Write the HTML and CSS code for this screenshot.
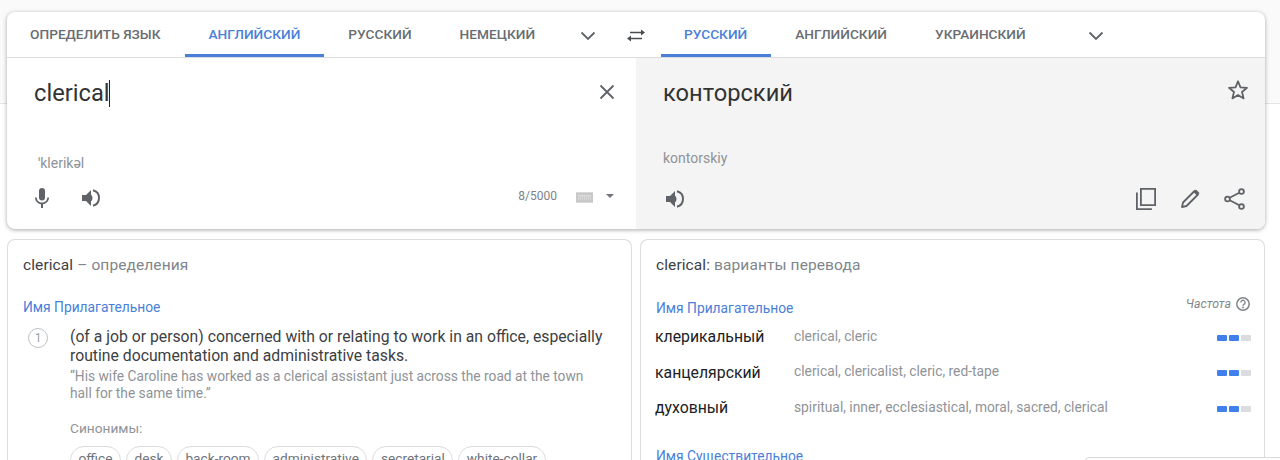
FILE: index.html
```html
<!DOCTYPE html>
<html lang="ru">
<head>
<meta charset="utf-8">
<title>Переводчик</title>
<link rel="stylesheet" href="styles.css">
</head>
<body>
<main class="page">
  <section class="translator">
    <div class="tabbar">
      <nav class="tabs tabs-src">
        <span class="tab">ОПРЕДЕЛИТЬ ЯЗЫК</span>
        <span class="tab tab-on">АНГЛИЙСКИЙ</span>
        <span class="tab">РУССКИЙ</span>
        <span class="tab">НЕМЕЦКИЙ</span>
        <svg class="chev" viewBox="0 0 16 10"><path d="M1.500 1.500 8 8l6.500-6.500" fill="none" stroke="#5f6368" stroke-width="1.800"/></svg>
      </nav>
      <svg class="swap" viewBox="0 0 18 13"><path fill="#4a4d50" d="M3 2.800h11V.5L18 3.500l-4 3V4.300H3zM15 8.800H4V6.500l-4 3 4 3v-2.200h11z"/></svg>
      <nav class="tabs tabs-dst">
        <span class="tab tab-on">РУССКИЙ</span>
        <span class="tab">АНГЛИЙСКИЙ</span>
        <span class="tab">УКРАИНСКИЙ</span>
        <svg class="chev chev-dst" viewBox="0 0 16 10"><path d="M1.500 1.500 8 8l6.500-6.500" fill="none" stroke="#5f6368" stroke-width="1.800"/></svg>
      </nav>
    </div>
    <div class="panes">
      <div class="pane pane-src">
        <div class="main-row">
          <span class="big-text">clerical<span class="caret"></span></span>
          <svg class="ico-x" viewBox="0 0 16 16"><path d="M1.500 1.500l13 13M14.500 1.500l-13 13" stroke="#5f6368" stroke-width="1.800" fill="none"/></svg>
        </div>
        <div class="phon phon-src">ˈklerikəl</div>
        <div class="actions">
          <svg class="ico mic" viewBox="0 0 24 24"><path fill="#5f6368" d="M12 14.500a3 3 0 0 0 3-3V5a3 3 0 0 0-6 0v6.500a3 3 0 0 0 3 3zm5.300-3c0 3-2.500 5.100-5.300 5.100S6.700 14.500 6.700 11.500H5c0 3.400 2.700 6.200 6 6.700V22h2v-3.800c3.300-.5 6-3.300 6-6.700z"/></svg>
          <svg class="ico spk" viewBox="0 0 24 24"><path fill="#5f6368" d="M3 9v6h4l5 5V4L7 9zm10.500 3c0-1.800-1-3.300-2.500-4v8c1.500-.7 2.500-2.200 2.500-4z"/><path fill="none" stroke="#5f6368" stroke-width="2" d="M14 4.300c3.500.9 6 4 6 7.700s-2.500 6.800-6 7.700"/></svg>
          <span class="count">8/5000</span>
          <svg class="kbd" viewBox="0 0 18 11"><rect width="18" height="11" fill="#c8c8c8"/><path d="M2 3.500h14M3 3v5M5 3v5M7 3v5M9 3v5M11 3v5M13 3v5M15 3v5" stroke="#e8e8e8" stroke-width=".6"/></svg>
          <span class="tri"></span>
        </div>
      </div>
      <div class="pane pane-dst">
        <div class="main-row">
          <span class="big-text">конторский</span>
          <svg class="ico-star" viewBox="0 0 24 24"><path fill="none" stroke="#5f6368" stroke-width="1.800" stroke-linejoin="round" d="M12 3.300l2.500 6 6.500.5-5 4.200 1.600 6.400L12 17l-5.600 3.400L8 14 3 9.800l6.500-.5z"/></svg>
        </div>
        <div class="phon phon-dst">kontorskiy</div>
        <div class="actions">
          <svg class="ico spk" viewBox="0 0 24 24"><path fill="#5f6368" d="M3 9v6h4l5 5V4L7 9zm10.500 3c0-1.800-1-3.300-2.500-4v8c1.500-.7 2.500-2.200 2.500-4z"/><path fill="none" stroke="#5f6368" stroke-width="2" d="M14 4.300c3.500.9 6 4 6 7.700s-2.500 6.800-6 7.700"/></svg>
          <span class="spacer"></span>
          <svg class="ico copy" viewBox="0 0 24 24"><path fill="none" stroke="#5f6368" stroke-width="1.800" d="M6.900 1.900h14.200v16.200H6.900z"/><path fill="none" stroke="#5f6368" stroke-width="1.800" d="M2.900 5.500v16.600h15"/></svg>
          <svg class="ico pencil" viewBox="0 0 24 24"><path fill="none" stroke="#5f6368" stroke-width="1.800" stroke-linejoin="round" d="M4 20l1-4.500L16.500 4l3.500 3.500L8.500 19z"/><path fill="#5f6368" d="M15.500 5l2.500-2.500 3.500 3.500L19 8.500z"/></svg>
          <svg class="ico share" viewBox="0 0 24 24"><g fill="none" stroke="#5f6368" stroke-width="1.800"><circle cx="18.500" cy="4.500" r="2.400"/><circle cx="4.500" cy="12" r="2.400"/><circle cx="18.500" cy="19.500" r="2.400"/><path d="M6.700 10.800l9.600-5.100M6.700 13.200l9.600 5.100"/></g></svg>
        </div>
      </div>
    </div>
  </section>

  <div class="lower">
    <section class="card">
      <h2 class="card-title"><span class="word">clerical</span> – определения</h2>
      <h3 class="pos">Имя Прилагательное</h3>
      <div class="def">
        <span class="num">1</span>
        <div class="def-body">
          <p class="def-text">(of a job or person) concerned with or relating to work in an office, especially routine documentation and administrative tasks.</p>
          <p class="def-ex">“His wife Caroline has worked as a clerical assistant just across the road at the town hall for the same time.”</p>
          <p class="syn-label">Синонимы:</p>
          <div class="chips">
            <span class="chip">office</span><span class="chip">desk</span><span class="chip">back-room</span><span class="chip">administrative</span><span class="chip">secretarial</span><span class="chip">white-collar</span>
          </div>
        </div>
      </div>
    </section>
    <section class="card card-r">
      <h2 class="card-title"><span class="word">clerical:</span> варианты перевода</h2>
      <div class="pos-row">
        <h3 class="pos pos-tr">Имя Прилагательное</h3>
        <span class="freq">Частота <svg class="help" viewBox="0 0 16 16"><circle cx="8" cy="8" r="6.200" fill="none" stroke="#80868b" stroke-width="1.500"/><path d="M5.900 6.400a2.100 2.100 0 1 1 3.300 1.700c-.8.500-1.200.9-1.200 1.700" fill="none" stroke="#80868b" stroke-width="1.300"/><circle cx="8" cy="11.500" r=".9" fill="#80868b"/></svg></span>
      </div>
      <div class="tr-row"><span class="tr-word">клерикальный</span><span class="tr-syn">clerical, cleric</span><span class="bars"><i></i><i></i><i class="off"></i></span></div>
      <div class="tr-row"><span class="tr-word">канцелярский</span><span class="tr-syn">clerical, clericalist, cleric, red-tape</span><span class="bars"><i></i><i></i><i class="off"></i></span></div>
      <div class="tr-row"><span class="tr-word">духовный</span><span class="tr-syn">spiritual, inner, ecclesiastical, moral, sacred, clerical</span><span class="bars"><i></i><i></i><i class="off"></i></span></div>
      <h3 class="pos pos-noun">Имя Существительное</h3>
    </section>
  </div>
  <div class="popup"></div>
</main>
</body>
</html>
```
FILE: styles.css
```css
html, body {
  margin: 0;
  height: 460px;
  overflow: hidden;
}
body {
  background: linear-gradient(#fafafa 0, #fafafa 103px, #e4e4e4 103px, #e4e4e4 104px, #fff 104px);
  font-family: Roboto, "Noto Sans", sans-serif;
  color: #3c4043;
}
.page {
  position: relative;
  height: 460px;
  padding: 12px 15px 0 7px;
  box-sizing: border-box;
  overflow: hidden;
}
h2, h3, p { margin: 0; font-weight: 400; }

.translator {
  background: #fff;
  border-radius: 8px;
  box-shadow: 0 1px 4px rgba(0,0,0,.34);
  height: 217px;
  overflow: hidden;
}
.tabbar {
  display: flex;
  align-items: stretch;
  height: 46px;
  box-sizing: border-box;
  border-bottom: 1px solid #dcdcdc;
}
.tabs { display: flex; align-items: stretch; }
.tabs-src { width: 620px; flex: none; }
.tabs-dst { flex: 1; padding-left: 16px; }
.tab {
  padding: 0 24px;
  font-size: 13.7px;
  font-weight: 500;
  line-height: 45px;
  height: 45px;
  box-sizing: border-box;
  color: #696d71;
  white-space: nowrap;
}
.tabs-src .tab:first-child { padding-left: 23px; }
.tabs-dst .tab:first-child { padding-left: 23px; }
.tab-on {
  color: #4a7fd9;
  border-bottom: 3px solid #4a7fd9;
}
.chev { width: 16px; height: 10px; align-self: center; margin: 3px 0 0 21px; }
.chev-dst { margin-left: 38px; }
.swap { width: 18px; height: 13px; flex: none; align-self: center; margin: 1px 0 0 0; }

.panes { display: flex; height: 171px; }
.pane { box-sizing: border-box; display: flex; flex-direction: column; }
.pane-src { width: 629px; padding: 0 20px 0 27px; flex: none; }
.pane-dst { flex: 1; background: #f4f4f4; padding: 0 15px 0 27px; }
.main-row {
  display: flex;
  justify-content: space-between;
  align-items: flex-start;
  height: 90px;
}
.big-text {
  font-size: 23.7px;
  line-height: 28px;
  margin-top: 21px;
  color: #333;
}
.caret {
  display: inline-block;
  width: 1px;
  height: 27px;
  background: #222;
  margin-left: -1px;
  vertical-align: -6px;
}
.ico-x { width: 16px; height: 16px; margin: 26px 1px 0 0; }
.ico-star { width: 24px; height: 24px; margin: 20px 0 0 0; }
.phon { font-size: 14px; line-height: 16px; color: #8f9397; }
.phon-src { margin: 7px 0 0 4px; }
.phon-dst { margin: 2px 0 0 0; }
.actions { display: flex; align-items: center; }
.pane-src .actions { margin-top: 15px; height: 24px; }
.pane-dst .actions { margin-top: 21px; height: 24px; }
.ico { width: 24px; height: 24px; flex: none; }
.mic { margin-left: -4px; }
.spk { margin-left: 25px; }
.pane-dst .spk { margin-left: 0; }
.count { margin: 0 19px 4px auto; font-size: 12px; color: #7d8185; }
.kbd { width: 17px; height: 11px; margin: 0 13px 2px 0; }
.tri {
  width: 0; height: 0;
  border: 4px solid transparent;
  border-top-color: #70757a;
  border-bottom: 0;
  margin: 0 2px 4px 0;
}
.spacer { flex: 1; }
.copy { margin-right: 20px; }
.pencil { margin-right: 21px; }
.share { margin-right: 3px; }

.lower { display: flex; gap: 8px; margin-top: 10px; }
.card {
  width: 625px;
  height: 240px;
  box-sizing: border-box;
  background: #fff;
  border: 1px solid #dadce0;
  border-bottom: 0;
  border-radius: 8px 8px 0 0;
  padding: 0 13px 0 15px;
  flex: none;
}
.card-title {
  font-size: 15.500px;
  line-height: 20px;
  margin-top: 15px;
  color: #80868b;
  letter-spacing: .1px;
}
.word { color: #3c4043; }
.pos { font-size: 13.8px; line-height: 18px; color: #4a7fd9; }
.card-title + .pos { margin-top: 23px; }
.def { display: flex; margin-top: 11px; }
.num {
  box-sizing: border-box;
  flex: none;
  width: 20px; height: 20px;
  border: 1px solid #bdc1c6;
  border-radius: 50%;
  font-size: 12px;
  line-height: 18px;
  text-align: center;
  color: #9aa0a6;
  margin: 1px 22px 0 5px;
}
.def-body { width: 540px; }
.def-text { font-size: 15.75px; line-height: 19px; color: #3c4043; }
.def-ex { font-size: 13.75px; line-height: 17px; color: #8f9397; margin-top: 2.500px; max-width: 520px; }
.syn-label { font-size: 13.7px; line-height: 18px; color: #8f9397; margin-top: 17.500px; }
.chips { display: flex; gap: 5px; margin-top: 9px; }
.chip {
  box-sizing: border-box;
  height: 28px;
  padding: 0 7.500px;
  border: 1px solid #dadce0;
  border-radius: 14px;
  font-size: 13.7px;
  line-height: 22px;
  color: #70757a;
  white-space: nowrap;
}
.pos-row { display: flex; justify-content: space-between; align-items: flex-start; margin: 24px 0 2px; }
.freq { font-size: 12.3px; font-style: italic; color: #80868b; display: flex; align-items: center; gap: 4px; margin-top: -3px; }
.help { width: 16px; height: 16px; }
.tr-row { display: flex; align-items: center; height: 35.500px; margin-left: -1px; }
.tr-word { width: 139px; font-size: 15.8px; color: #202124; flex: none; }
.tr-syn { font-size: 13.8px; color: #8f9397; flex: 1; margin-top: -2px; }
.bars { display: flex; gap: 2px; flex: none; margin-top: 2px; }
.bars i { width: 10px; height: 6px; background: #4080ec; display: block; border-radius: 1px; }
.bars i.off { background: #dadce0; }
.pos-noun { margin-top: 21px; }
.popup {
  position: absolute;
  left: 1085px;
  top: 457px;
  width: 220px;
  height: 40px;
  background: #fff;
  border: 1px solid #d9d9d9;
  border-radius: 4px;
}
```
